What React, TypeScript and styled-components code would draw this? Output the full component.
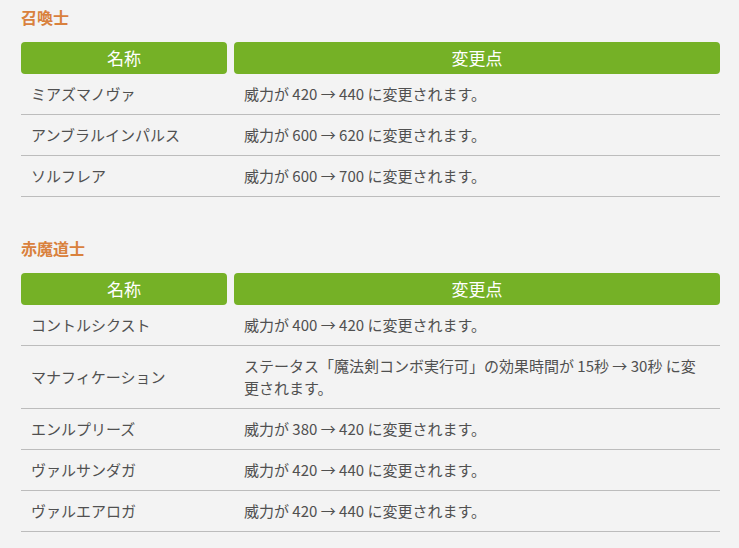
import React from 'react';
import styled, { createGlobalStyle } from 'styled-components';

const GlobalStyle = createGlobalStyle`
  body {
    margin: 0;
    background: #f3f3f3;
    font-family: "Noto Sans CJK JP", "Noto Sans", sans-serif;
    color: #505050;
  }
`;

interface Row {
    name: string;
    change: string;
}

interface Job {
    title: string;
    rows: Row[];
}

const JOBS: Job[] = [
    {
        title: '召喚士',
        rows: [
            { name: 'ミアズマノヴァ', change: '威力が 420 → 440 に変更されます。' },
            { name: 'アンブラルインパルス', change: '威力が 600 → 620 に変更されます。' },
            { name: 'ソルフレア', change: '威力が 600 → 700 に変更されます。' },
        ],
    },
    {
        title: '赤魔道士',
        rows: [
            { name: 'コントルシクスト', change: '威力が 400 → 420 に変更されます。' },
            { name: 'マナフィケーション', change: 'ステータス「魔法剣コンボ実行可」の効果時間が 15秒 → 30秒 に変更されます。' },
            { name: 'エンルプリーズ', change: '威力が 380 → 420 に変更されます。' },
            { name: 'ヴァルサンダガ', change: '威力が 420 → 440 に変更されます。' },
            { name: 'ヴァルエアロガ', change: '威力が 420 → 440 に変更されます。' },
        ],
    },
];

const Page = styled.div`
  width: 699px;
  padding: 5px 19px 0 21px;
`;

const Section = styled.section`
  margin-bottom: 39px;

  &:last-child {
    margin-bottom: 0;
  }
`;

const Heading = styled.h3`
  margin: 0 0 13px;
  font-size: 16px;
  line-height: 24px;
  font-weight: bold;
  color: #d9813d;
`;

const Grid = styled.div`
  display: grid;
  grid-template-columns: 206px 1fr;
  column-gap: 7px;
`;

const HeadRow = styled(Grid)``;

const HeadCell = styled.div`
  height: 32px;
  line-height: 31px;
  background: #75b126;
  border-radius: 4px;
  color: #fff;
  text-align: center;
  font-size: 17px;
`;

const BodyRow = styled(Grid)`
  border-bottom: 1px solid #bcbcbc;
  align-items: center;
`;

const Cell = styled.div`
  padding: 9px 10px;
  font-size: 15px;
  line-height: 22px;
`;

const App = () => {
    return (
        <>
            <GlobalStyle />
            <Page>
                {JOBS.map(job => (
                    <Section key={job.title}>
                        <Heading>{job.title}</Heading>
                        <HeadRow>
                            <HeadCell>名称</HeadCell>
                            <HeadCell>変更点</HeadCell>
                        </HeadRow>
                        {job.rows.map(r => (
                            <BodyRow key={r.name}>
                                <Cell>{r.name}</Cell>
                                <Cell>{r.change}</Cell>
                            </BodyRow>
                        ))}
                    </Section>
                ))}
            </Page>
        </>
    );
};

export default App;
